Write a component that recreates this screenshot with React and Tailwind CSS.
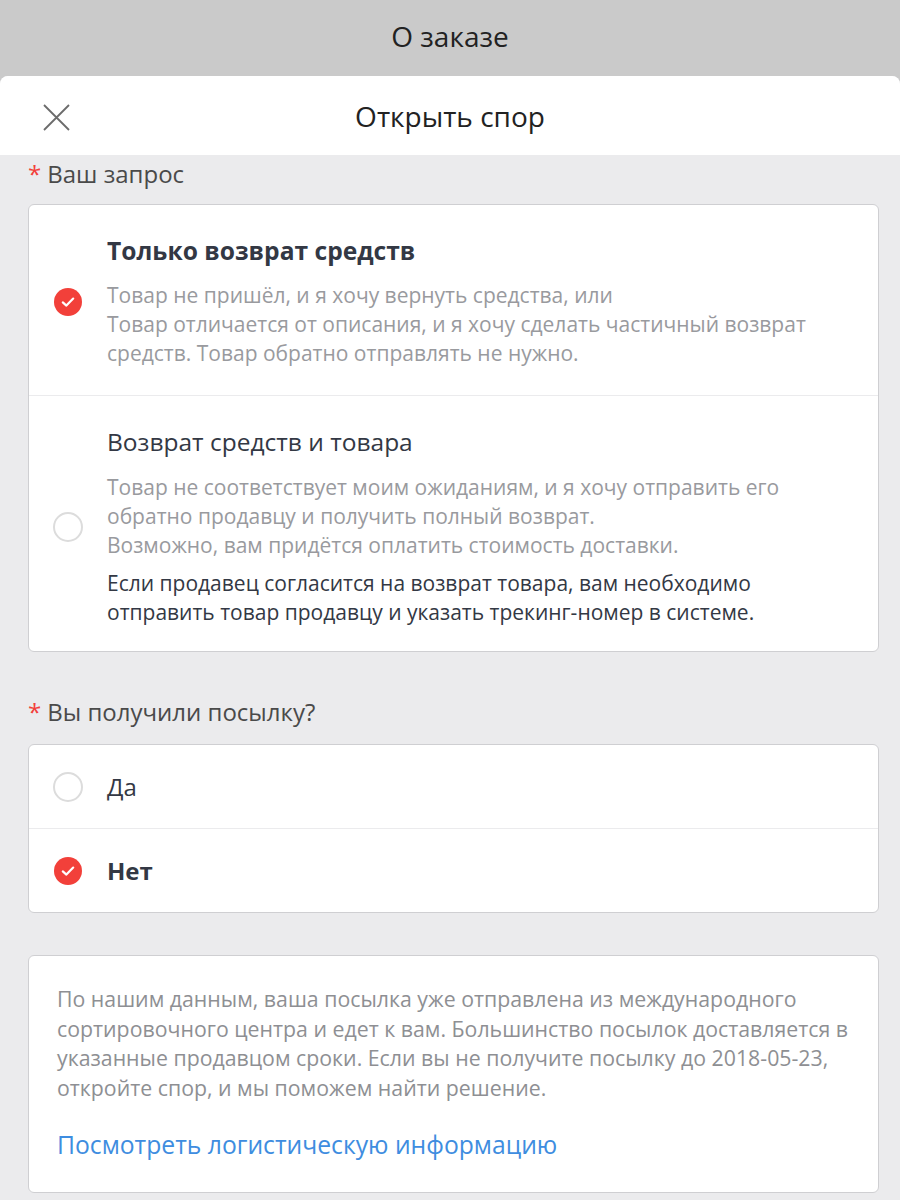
import React from 'react';

const font = { fontFamily: '"Open Sans", "Noto Sans", sans-serif' };

const Checked = () => (
  <span className="flex h-[28px] w-[28px] shrink-0 items-center justify-center rounded-full bg-[#f2403a]">
    <svg width="16" height="16" viewBox="0 0 16 16" fill="none">
      <path d="M2.8 8.4 L6.4 11.6 L13.2 4.6" stroke="white" strokeWidth="2.2" strokeLinecap="round" strokeLinejoin="round" />
    </svg>
  </span>
);

const Unchecked = () => (
  <span className="block h-[30px] w-[30px] shrink-0 rounded-full border-2 border-[#dcdcdc] bg-white" />
);

const Label = ({ children }) => (
  <div className="flex items-center px-[28px] text-[24px] leading-none text-[#4a4a4a]">
    <span className="mr-[6px] text-[#f2403a]">*</span>
    {children}
  </div>
);

const Lines = ({ items }) => items.map((t) => (
  <span key={t} className="block whitespace-nowrap">{t}</span>
));

export default function App() {
  return (
    <div className="min-h-[1200px] w-[900px] bg-[#cacaca]" style={font}>
      {/* Верхняя панель */}
      <div className="flex h-[76px] items-center justify-center pb-[4px] text-[28px] text-[#222]">
        О заказе
      </div>

      <div className="rounded-t-[8px] bg-[#ebebed] pb-[10px]">
        {/* Заголовок модального окна */}
        <div className="relative flex h-[79px] items-center justify-center rounded-t-[8px] bg-white text-[28px] text-[#222]">
          <svg className="absolute left-[43px] top-[28px]" width="27" height="27" viewBox="0 0 27 27" fill="none">
            <path d="M1 1 L26 26 M26 1 L1 26" stroke="#6b6b6b" strokeWidth="1.8" />
          </svg>
          Открыть спор
        </div>

        <div className="pt-[7px]">
          <Label>Ваш запрос</Label>

          <div className="ml-[28px] mr-[21px] mt-[18px] overflow-hidden rounded-[6px] border border-[#cfcfd2] bg-white">
            {/* Вариант 1 */}
            <div className="flex items-center border-b border-[#ebebed] pb-[27px] pt-[31px]">
              <div className="flex w-[78px] shrink-0 justify-center"><Checked /></div>
              <div className="pr-[20px]">
                <div className="text-[24.6px] font-bold leading-[30px] text-[#333844]">Только возврат средств</div>
                <div className="mt-[15px] text-[21px] leading-[29px] text-[#999a9e]">
                  <Lines items={[
                    'Товар не пришёл, и я хочу вернуть средства, или',
                    'Товар отличается от описания, и я хочу сделать частичный возврат',
                    'средств. Товар обратно отправлять не нужно.',
                  ]} />
                </div>
              </div>
            </div>

            {/* Вариант 2 */}
            <div className="flex items-center pb-[24px] pt-[31px]">
              <div className="flex w-[78px] shrink-0 justify-center"><Unchecked /></div>
              <div className="pr-[20px]">
                <div className="text-[24.5px] leading-[30px] text-[#333844]">Возврат средств и товара</div>
                <div className="mt-[16px] text-[21px] leading-[29px] text-[#999a9e]">
                  <Lines items={[
                    'Товар не соответствует моим ожиданиям, и я хочу отправить его',
                    'обратно продавцу и получить полный возврат.',
                    'Возможно, вам придётся оплатить стоимость доставки.',
                  ]} />
                </div>
                <div className="mt-[9px] text-[21px] leading-[29px] text-[#333844]">
                  <Lines items={[
                    'Если продавец согласится на возврат товара, вам необходимо',
                    'отправить товар продавцу и указать трекинг-номер в системе.',
                  ]} />
                </div>
              </div>
            </div>
          </div>

          <div className="mt-[48px]">
            <Label>Вы получили посылку?</Label>
          </div>

          <div className="ml-[28px] mr-[21px] mt-[20px] overflow-hidden rounded-[6px] border border-[#cfcfd2] bg-white">
            <div className="flex h-[84px] items-center border-b border-[#ebebed]">
              <div className="flex w-[78px] shrink-0 justify-center"><Unchecked /></div>
              <span className="text-[24px] text-[#333844]">Да</span>
            </div>
            <div className="flex h-[83px] items-center">
              <div className="flex w-[78px] shrink-0 justify-center"><Checked /></div>
              <span className="text-[24px] font-bold text-[#333844]">Нет</span>
            </div>
          </div>

          {/* Информация о доставке */}
          <div className="ml-[28px] mr-[21px] mt-[42px] rounded-[6px] border border-[#cfcfd2] bg-white px-[28px] pb-[32px] pt-[28px]">
            <p className="text-[21.3px] leading-[29.5px] text-[#8e8f93]">
              <Lines items={[
                'По нашим данным, ваша посылка уже отправлена из международного',
                'сортировочного центра и едет к вам. Большинство посылок доставляется в',
                'указанные продавцом сроки. Если вы не получите посылку до 2018-05-23,',
                'откройте спор, и мы поможем найти решение.',
              ]} />
            </p>
            <p className="mt-[28px] text-[24.7px] leading-[30px] text-[#3e8de0]">Посмотреть логистическую информацию</p>
          </div>
        </div>
      </div>
    </div>
  );
}
